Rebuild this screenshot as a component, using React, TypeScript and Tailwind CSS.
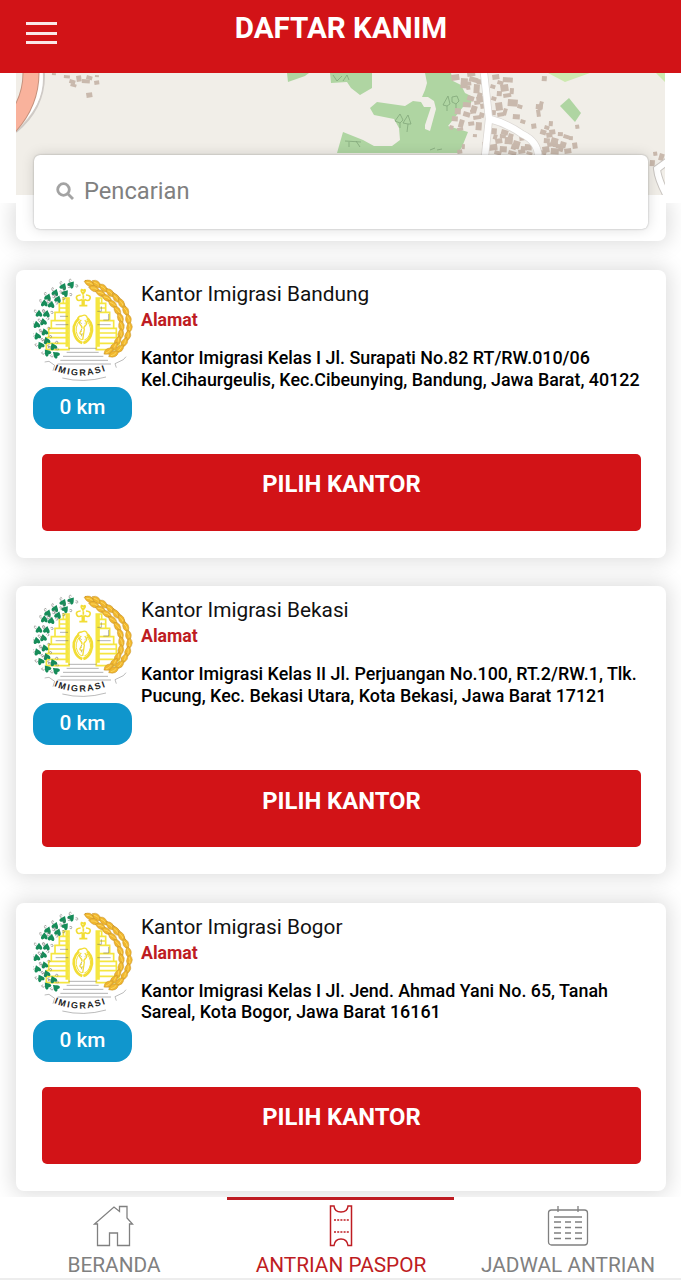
import { useState } from 'react';

interface Office {
  id: number;
  name: string;
  address: string;
  distance: number;
}

const offices: Office[] = [
  {
    id: 1,
    name: 'Kantor Imigrasi Bandung',
    address: 'Kantor Imigrasi Kelas I Jl. Surapati No.82 RT/RW.010/06 Kel.Cihaurgeulis, Kec.Cibeunying, Bandung, Jawa Barat, 40122',
    distance: 0,
  },
  {
    id: 2,
    name: 'Kantor Imigrasi Bekasi',
    address: 'Kantor Imigrasi Kelas II Jl. Perjuangan No.100, RT.2/RW.1, Tlk. Pucung, Kec. Bekasi Utara, Kota Bekasi, Jawa Barat 17121',
    distance: 0,
  },
  {
    id: 3,
    name: 'Kantor Imigrasi Bogor',
    address: 'Kantor Imigrasi Kelas I Jl. Jend. Ahmad Yani No. 65, Tanah Sareal, Kota Bogor, Jawa Barat 16161',
    distance: 0,
  },
];

// x, y, rotation
const leaves = [
  [154, 44, 40], [130, 50, 25], [136, 70, 40], [106, 68, 20], [114, 88, 20],
  [84, 82, 20], [94, 104, 10], [73, 100, 0], [80, 132, 10], [57, 131, 0], [70, 156, -10],
  [50, 164, -10], [74, 186, -15], [52, 198, -20], [80, 212, -20], [62, 226, -30], [100, 230, -25],
  [82, 248, -40], [108, 254, -50],
];

const grains = [
  [208, 40, 25], [230, 42, 40], [222, 56, 20], [250, 54, 45], [242, 70, 25], [270, 68, 45], [260, 84, 30],
  [288, 84, 55], [278, 102, 40], [304, 100, 60], [292, 122, 55], [317, 122, 65], [301, 144, 68],
  [325, 148, 80], [304, 168, 80], [328, 172, 95], [302, 192, 98], [323, 197, 105], [293, 213, 115],
  [313, 217, 120], [282, 230, 130], [299, 236, 138], [266, 243, 150], [281, 252, 155],
];

// small houses next to the main road: x, y, width, height
const houses = [
  [451, 75, 8, 6], [461, 78, 7, 10], [470, 76, 9, 5], [466, 86, 4, 4], [474, 84, 6, 9], [468, 95, 7, 5], [476, 97, 7, 6],
  [463, 102, 8, 5], [472, 105, 6, 7], [480, 104, 5, 5], [455, 108, 6, 6], [464, 111, 7, 5], [473, 116, 8, 4],
  [452, 116, 6, 5], [460, 119, 5, 8], [468, 122, 6, 4], [476, 122, 6, 8], [450, 125, 4, 4], [457, 128, 6, 3],
  [473, 134, 4, 3], [480, 112, 5, 5], [492, 75, 7, 5], [503, 77, 10, 5], [491, 84, 5, 4], [500, 85, 8, 7],
  [510, 88, 4, 6], [492, 96, 5, 4], [503, 94, 8, 4], [508, 99, 10, 7], [518, 104, 5, 4], [495, 103, 7, 8],
  [491, 110, 5, 5], [504, 108, 4, 7], [497, 113, 7, 4], [513, 114, 7, 5], [521, 119, 5, 4], [531, 124, 5, 5],
  [536, 104, 7, 5], [540, 101, 4, 9], [536, 110, 4, 7], [549, 121, 4, 5], [541, 129, 6, 5], [549, 130, 6, 5],
  [491, 128, 6, 6], [502, 129, 7, 5], [495, 139, 7, 5], [505, 137, 8, 7], [514, 140, 7, 8], [488, 145, 9, 6],
  [500, 146, 7, 6], [509, 150, 8, 4], [518, 150, 7, 4], [525, 144, 7, 6], [527, 151, 6, 3], [482, 142, 3, 4],
  [544, 138, 6, 5], [552, 137, 7, 7], [542, 147, 7, 6], [551, 148, 8, 6], [561, 141, 6, 6], [564, 149, 7, 5],
  [558, 132, 5, 4], [564, 134, 6, 4], [572, 143, 5, 6], [569, 136, 4, 4], [545, 125, 5, 4], [575, 125, 4, 4],
  [542, 76, 5, 5], [541, 150, 6, 4], [457, 150, 5, 4], [462, 144, 3, 5], [512, 144, 5, 5], [547, 143, 6, 4],
  [556, 144, 5, 4], [495, 150, 7, 4], [470, 110, 5, 4], [497, 91, 5, 5], [498, 80, 6, 4], [467, 73, 8, 4],
  [500, 134, 6, 4], [509, 133, 5, 5], [519, 136, 5, 5], [521, 146, 6, 4], [494, 134, 4, 5], [546, 133, 6, 5],
  [553, 142, 5, 5], [559, 146, 5, 5], [465, 82, 6, 4], [477, 79, 6, 5], [478, 92, 5, 5], [474, 101, 6, 4],
  [650, 160, 5, 6], [660, 153, 5, 7], [653, 152, 4, 4],
  [64, 75, 6, 3], [70, 79, 6, 4], [76, 76, 5, 6], [82, 79, 8, 4], [87, 75, 6, 4], [94, 81, 5, 4], [95, 75, 4, 2],
  [71, 83, 6, 3], [86, 93, 6, 5], [52, 73, 4, 2], [34, 76, 4, 3], [34, 80, 3, 4],
];

const MapView = () => (
  <svg viewBox="16 73 649 122" className="block h-[122px] w-[649px] bg-[#f1eee8]">
    <g fill="#afd5a2">
      <path d="M330 73h42v15l-12 7-9-7-4-6-16 1z" />
      <path d="M287 73h22l-4 3-17 6z" />
      <path d="M425 73h26l2 8 8 4 4 8 8 4-2 6-8 4-15 19 20 6-6 15-4 6h-121l6-21 20 8 11 6 18 0 8-6-1-12-5-9-20-4-4-7 7-6 28 4 8-5 8 1 3 5 7 0-6 18 0 4 5 2 6-22-2-8-6-4-6 0 3-7 2-7z" />
      <path d="M560 106l9-8 12 15-6 9z" />
    </g>
    <path d="M548 73h42l-25 9zM656 73h9v9z" fill="#cdeab0" />
    <path d="M407 132l1-8-5-1 5-8 3 9-3 0M400 128v-5l-5-2 5-7 3 6-3 3M447 111v-5l-4-1 5-9 2 8-3 2M456 111v-7l-4-2v-5l5-1 2 5-3 3M345 141l16 1M349 142v5M356 141l4 6M333 75l4 6 5-5M343 81l4-6 2 5M430 150l5-2M437 150l5-1" fill="none" stroke="#82a77a" strokeWidth="0.8" />
    <g fill="#c9b9ad">
      {houses.map(([x, y, w, h], i) => (
        <rect key={i} x={x} y={y} width={w} height={h} transform={`rotate(${(i % 3) * 12 - 8} ${x} ${y})`} />
      ))}
    </g>
    <g fill="none">
      <path d="M44 73Q45 108 16 132" stroke="#cfcac6" strokeWidth="2" />
      <path d="M36 73Q39 100 16 120" stroke="#fff" strokeWidth="13" />
      <path d="M31 73Q31 104 8 128" stroke="#c4917d" strokeWidth="17" />
      <path d="M31 73Q31 104 8 128" stroke="#f9b29c" strokeWidth="15" />
      <path d="M484 73L489 119L484 165M490 119Q506 123 522 134Q541 143 538 163" stroke="#dbd7d3" strokeWidth="8" />
      <path d="M484 73L489 119L484 165M490 119Q506 123 522 134Q541 143 538 163" stroke="#fff" strokeWidth="6.5" />
      <path d="M672 158L657 169Q658 180 668 198" stroke="#c9c5c1" strokeWidth="8" />
      <path d="M672 158L657 169Q658 180 668 198" stroke="#fff" strokeWidth="6" />
    </g>
  </svg>
);

const ImigrasiLogo = () => (
  <svg viewBox="39 24 300 309" className="h-[103px] w-[100px]">
    {/* Stairs */}
    <g fill="none" stroke="#f5e640" strokeWidth="5">
      <path d="M147 84h-17v16h-12v27h-13v25h-11v23h-8v28h-7v36h68zM130 100h17M118 114h29M118 127h29M105 152h42M94 175h53M86 189h61M86 203h61M79 220h68" />
      <path d="M229 84h16v16h12v27h12v25h12v23h8v28h8v36h-68zM229 100h16M229 114h28M229 127h28M229 152h40M229 175h52M229 189h60M229 203h60M229 220h68" />
      <path d="M141 84v146M235 84v146" strokeWidth="9" />
    </g>
    <g fill="none" stroke="#666" strokeWidth="1.5">
      <path d="M146 235h83M140 247h96M129 259h121M121 271h143M113 282h160M232 124h12v-15M250 150h16v-18M120 139h24M107 164h38M232 164h40" />
    </g>
    {/* Tree and ring in the middle */}
    <g fill="none" stroke="#f2dd35" strokeWidth="5">
      <path d="M187 106V88M192 106V88M178 107h24M186 88q-12 8-16-2t12-11M194 88q12 8 16-2t-12-11M190 76v10" />
      <path d="M190 62q-8-8-6 2l5 8 6-8q3-9-5-2z" />
      <path d="M177 145q-24 22-12 52q6 16 22 22M202 145q22 22 10 52q-7 17-22 22" strokeWidth="8" />
      <path d="M179 152q-17 22-7 43q5 13 14 15M201 152q17 22 7 43q-5 13-15 15" strokeWidth="3" />
      <path d="M172 151q1-13 13-13q14-7 17 6q10 5 5 12M184 150q-10 8-3 14t4 12M194 151q11 8 3 15t-4 12M185 183q-11 7 0 11M193 177l-5 33" strokeWidth="4" />
    </g>
    <path d="M181 158l4 3M194 161l3-2M185 177l-3 7M187 190l-3 9" stroke="#a39436" strokeWidth="2" />
    {/* Cotton branch */}
    {leaves.map(([x, y, r], i) => (
      <g key={i} transform={`translate(${x} ${y}) rotate(${r})`}>
        <path d="M0-12C4-5 13 1 9 8Q4 11 0 6Q-4 11-9 8C-13 1-4-5 0-12z" fill="#168c59" />
        <path d="M-8-10q-8-4-6 3t7 2M10-8q5-6 8-1t-5 5" fill="none" stroke="#70706c" strokeWidth="1.5" />
      </g>
    ))}
    {/* Rice branch */}
    <path d="M195 31l28 8 30 14M202 35Q330 65 325 160Q320 242 265 252" fill="none" stroke="#c88f27" strokeWidth="3" />
    {grains.map(([x, y, r], i) => (
      <g key={i} transform={`translate(${x} ${y}) rotate(${r})`}>
        <path d="M-17 1Q-4-18 17-1Q5 17-17 1z" fill="#f0b62e" stroke="#bd8c2c" strokeWidth="1.2" />
        <path d="M-9 1Q0-4 10-1" fill="none" stroke="#ffe16c" strokeWidth="2" />
      </g>
    ))}
    {/* Ribbon */}
    <path d="M74 276l13-2 17 12-5 16M318 260l-8 9-25 12 4 12M127 324Q190 340 258 321" fill="none" stroke="#777" strokeWidth="1.5" />
    <path id="ribbon" d="M102 300Q190 340 300 284" fill="none" />
    <text fill="#242424" fontSize="27" fontWeight="700" fontFamily="'Liberation Sans', sans-serif" letterSpacing="5">
      <textPath href="#ribbon">IMIGRASI</textPath>
    </text>
  </svg>
);

const HomeIcon = () => (
  <svg viewBox="0 0 42 42" className="h-[42px] w-[42px]" fill="none" stroke="currentColor" strokeWidth="1.3">
    <path d="M4.5 19v21.5h12V28h8v12.5h12V19h3L34 13V1.5h-7.5v5L21 2 1.5 19z" />
  </svg>
);

const TicketIcon = () => (
  <svg viewBox="0 0 42 42" className="h-[42px] w-[42px]" fill="none" stroke="currentColor" strokeWidth="1.5">
    <path d="M10.5 1H14Q14.5 7 21 7T28 1h3.500v39.500H28Q27 34 21 34t-7 6.500h-3.500z" />
    <path d="M14 15h15M14 27h15" strokeDasharray="2 1.2" />
  </svg>
);

const CalendarIcon = () => (
  <svg viewBox="0 0 42 42" className="h-[42px] w-[42px]" fill="none" stroke="currentColor" strokeWidth="1.3">
    <rect x="1.5" y="5" width="39" height="35" rx="3" />
    <path d="M11 1v6M31 1v6M7 12h28M7 17h7M18 17h6M28 17h7M7 22.5h7M18 22.5h6M28 22.5h7M7 28h7M18 28h6M28 28h7M7 33.5h7M18 33.5h6M28 33.5h7" />
  </svg>
);

const tabs = [
  { label: 'BERANDA', Icon: HomeIcon },
  { label: 'ANTRIAN PASPOR', Icon: TicketIcon },
  { label: 'JADWAL ANTRIAN', Icon: CalendarIcon },
];

const OfficeCard = ({ office }: { office: Office }) => (
  <div className="h-[288px] shrink-0 rounded-lg bg-white shadow-[0_0_20px_4px_rgba(0,0,0,0.13)]">
    <div className="flex h-[184px] pl-[17px] pt-[8px]">
      <div className="w-[100px] shrink-0">
        <ImigrasiLogo />
        <div className="mt-[6px] h-[42px] w-[99px] rounded-[16px] bg-[#1096cd] text-center text-[20.8px] font-medium leading-[41px] text-white">
          {office.distance} km
        </div>
      </div>
      <div className="ml-2 pt-[4px]">
        <h2 className="text-[20.8px] leading-[25px] text-[#111]">{office.name}</h2>
        <p className="text-[17.7px] font-bold leading-[26px] text-[#be1c22]">Alamat</p>
        <p className="mt-[14px] w-[505px] text-[17.87px] font-medium leading-[21.5px] text-black">{office.address}</p>
      </div>
    </div>
    <button className="mx-[26px] block h-[77px] w-[599px] rounded-[5px] bg-[#d21317] pb-[15px] text-[23.8px] font-bold text-white">
      PILIH KANTOR
    </button>
  </div>
);

const App = () => {
  const [query, setQuery] = useState('');
  const [activeTab, setActiveTab] = useState(1);

  return (
    <div className="flex h-[1280px] w-[681px] flex-col overflow-hidden bg-white font-[Roboto,sans-serif]">
      {/* Header */}
      <header className="relative z-10 flex h-[73px] shrink-0 bg-[#d21317] text-white">
        <button className="ml-[26px] mt-[22px] flex h-[22px] w-[31px] flex-col justify-between">
          <span className="h-[3px] w-full bg-white/90" />
          <span className="h-[3px] w-full bg-white/90" />
          <span className="h-[3px] w-full bg-white/90" />
        </button>
        <h1 className="mr-[56px] flex-1 pt-[10px] text-center text-[29.6px] font-bold leading-[36px]">DAFTAR KANIM</h1>
      </header>

      {/* Map and search */}
      <section className="relative h-[168px] shrink-0">
        <div className="relative z-10 h-[130px] bg-white px-4">
          <MapView />
        </div>
        <div className="ml-[16px] mr-[15px] h-[38px] rounded-b-lg bg-white shadow-[0_0_20px_4px_rgba(0,0,0,0.13)]" />
        <label className="absolute left-[34px] top-[82px] z-20 flex h-[74px] w-[614px] items-center rounded-md bg-white pl-[22px] shadow-[0_0_2px_rgba(0,0,0,0.3),0_0_14px_rgba(0,0,0,0.14)]">
          <svg viewBox="0 0 18 18" className="mb-[2px] h-[18px] w-[18px]" fill="none" stroke="#a3a3a3" strokeWidth="2.8">
            <circle cx="7.5" cy="7.5" r="5.8" />
            <path d="M11.5 11.5L17 17" />
          </svg>
          <input
            value={query}
            onChange={e => setQuery(e.target.value)}
            placeholder="Pencarian"
            className="ml-[10px] flex-1 text-[23.7px] outline-none placeholder:text-[#808080]"
          />
        </label>
      </section>

      {/* Offices */}
      <main className="relative flex min-h-0 flex-1 flex-col gap-[28.4px] pl-[16px] pr-[15px] pt-[29px]">
        {offices
          .filter(o => o.name.toLowerCase().includes(query.toLowerCase()))
          .map(o => <OfficeCard key={o.id} office={o} />)}
      </main>

      {/* Bottom tabs */}
      <nav className="relative z-10 flex h-[83px] shrink-0 border-b-2 border-[#ededed] bg-white">
        {tabs.map(({ label, Icon }, i) => (
          <button
            key={label}
            onClick={() => setActiveTab(i)}
            className={`flex flex-1 flex-col items-center border-t-[3px] pl-px pt-[5px] ${
              activeTab === i ? 'border-[#be1c22] text-[#be1c22]' : 'border-transparent text-[#808080]'
            }`}
          >
            <Icon />
            <span className="mt-[5px] whitespace-nowrap text-[20.8px] leading-[26px]">{label}</span>
          </button>
        ))}
      </nav>
    </div>
  );
};

export default App;
